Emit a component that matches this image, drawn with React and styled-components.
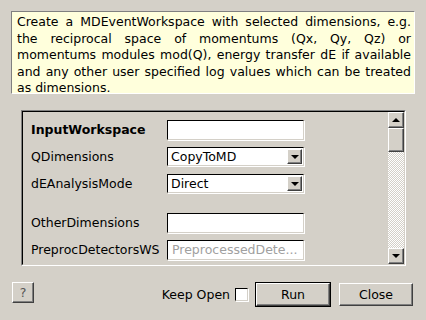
import React from "react";
import styled, { createGlobalStyle } from "styled-components";

const Global = createGlobalStyle`
  html, body { margin: 0; padding: 0; background: #d4d0c8; }
  body { font-family: "DejaVu Sans", "Liberation Sans", sans-serif; font-size: 12.5px; color: #000; }
  * { box-sizing: border-box; }
`;

const Dialog = styled.div`
  width: 426px;
  height: 320px;
  padding: 11px 13px 0 11px;
  background: #d4d0c8;
  display: flex;
  flex-direction: column;
`;

const Description = styled.p`
  margin: 0;
  width: 404px;
  height: 83px;
  padding: 2px 3px 0 5px;
  background: #ffffdc;
  border: 1px solid;
  border-color: #808080 #ffffff #ffffff #808080;
  font-size: 12.5px;
  line-height: 16.5px;
  text-align: justify;
`;

const Frame = styled.div`
  margin: 16px 0 0 10px;
  width: 385px;
  height: 156px;
  border: 1px solid;
  border-color: #808080 #ffffff #ffffff #808080;
  display: flex;
`;

const FrameInner = styled.div`
  flex: 1;
  display: flex;
  border: 1px solid;
  border-color: #000000 #d4d0c8 #d4d0c8 #000000;
`;

const Content = styled.div`
  flex: 1;
  padding: 4px 0 0 8px;
  display: flex;
  flex-direction: column;
`;

const Row = styled.div`
  height: 27px;
  display: flex;
  align-items: center;
`;

const Spacer = styled.div`
  height: 12px;
`;

const Label = styled.span`
  width: 136px;
  font-weight: ${(p) => (p.$bold ? "bold" : "normal")};
  white-space: nowrap;
`;

const TextInput = styled.div`
  width: 137px;
  height: 20px;
  background: #fff;
  border: 1px solid;
  border-color: #000 #d4d0c8 #d4d0c8 #000;
  box-shadow: 1px 1px 0 #fff;
  padding: 0 4px;
  display: flex;
  align-items: center;
  color: #a0a0a0;
  white-space: nowrap;
  overflow: hidden;
`;

const Combo = styled.div`
  width: 137px;
  height: 19px;
  background: #fff;
  border: 1px solid;
  border-color: #000 #d4d0c8 #d4d0c8 #000;
  box-shadow: 1px 1px 0 #fff;
  display: flex;
  align-items: center;
`;

const ComboText = styled.span`
  flex: 1;
  padding-left: 3px;
`;

const ArrowButton = styled.div`
  width: ${(p) => p.$w || 15}px;
  height: ${(p) => p.$h || 15}px;
  background: #d4d0c8;
  border: 1px solid;
  border-color: #fff #404040 #404040 #fff;
  box-shadow: inset -1px -1px 0 #808080;
  display: flex;
  align-items: center;
  justify-content: center;
  flex-shrink: 0;
  margin-right: ${(p) => p.$mr || 0}px;
`;

const Tri = styled.span`
  width: 0;
  height: 0;
  border-left: 4px solid transparent;
  border-right: 4px solid transparent;
  ${(p) => (p.$up ? "border-bottom: 4px solid #000;" : "border-top: 4px solid #000;")}
`;

const Scrollbar = styled.div`
  width: 16px;
  display: flex;
  flex-direction: column;
`;

const Thumb = styled.div`
  height: 24px;
  background: #d4d0c8;
  border: 1px solid;
  border-color: #fff #404040 #404040 #fff;
  box-shadow: inset -1px -1px 0 #808080;
`;

const Track = styled.div`
  flex: 1;
  background: repeating-conic-gradient(#d4d0c8 0 25%, #ffffff 0 50%) 0 0 / 2px 2px;
`;

const Footer = styled.div`
  margin-top: 16px;
  display: flex;
  align-items: flex-start;
`;

const Button = styled.button`
  font-family: "DejaVu Sans", "Liberation Sans", sans-serif;
  font-size: 12.5px;
  color: ${(p) => (p.$dim ? "#555" : "#000")};
  width: ${(p) => p.$w}px;
  height: ${(p) => p.$h}px;
  margin-top: ${(p) => p.$mt || 0}px;
  margin-left: ${(p) => p.$ml || 0}px;
  padding: 0;
  background: #d4d0c8;
  border: 1px solid;
  border-color: #fff #404040 #404040 #fff;
  box-shadow: inset -1px -1px 0 #808080;
`;

const DefaultWrap = styled.div`
  margin-left: 7px;
  border: 1px solid #000;
  display: flex;
`;

const Grow = styled.div`
  flex: 1;
`;

const KeepOpen = styled.label`
  display: flex;
  align-items: center;
  gap: 5px;
  height: 25px;
`;

const Check = styled.span`
  width: 13px;
  height: 13px;
  background: #fff;
  border: 1px solid;
  border-color: #000 #d4d0c8 #d4d0c8 #000;
  box-shadow: 1px 1px 0 #fff;
`;

export default function App() {
  return (
    <>
      <Global />
      <Dialog>
        <Description>
          Create a MDEventWorkspace with selected dimensions, e.g. the reciprocal space of momentums (Qx, Qy, Qz) or
          momentums modules mod(Q), energy transfer dE if available and any other user specified log values which
          can be treated as dimensions.
        </Description>
        <Frame>
          <FrameInner>
            <Content>
              <Row>
                <Label $bold>InputWorkspace</Label>
                <TextInput />
              </Row>
              <Row>
                <Label>QDimensions</Label>
                <Combo>
                  <ComboText>CopyToMD</ComboText>
                  <ArrowButton $w={15} $h={15} $mr={1}><Tri /></ArrowButton>
                </Combo>
              </Row>
              <Row>
                <Label>dEAnalysisMode</Label>
                <Combo>
                  <ComboText>Direct</ComboText>
                  <ArrowButton $w={15} $h={15} $mr={1}><Tri /></ArrowButton>
                </Combo>
              </Row>
              <Spacer />
              <Row>
                <Label>OtherDimensions</Label>
                <TextInput />
              </Row>
              <Row>
                <Label>PreprocDetectorsWS</Label>
                <TextInput>PreprocessedDete...</TextInput>
              </Row>
            </Content>
            <Scrollbar>
              <ArrowButton $w={16} $h={16}><Tri $up /></ArrowButton>
              <Thumb />
              <Track />
              <ArrowButton $w={16} $h={16}><Tri /></ArrowButton>
            </Scrollbar>
          </FrameInner>
        </Frame>
        <Footer>
          <Button $w={22} $h={21} $ml={1} $dim>?</Button>
          <Grow />
          <KeepOpen>
            Keep Open <Check />
          </KeepOpen>
          <DefaultWrap>
            <Button $w={74} $h={23}>Run</Button>
          </DefaultWrap>
          <Button $w={74} $h={23} $mt={1} $ml={8}>Close</Button>
        </Footer>
      </Dialog>
    </>
  );
}
